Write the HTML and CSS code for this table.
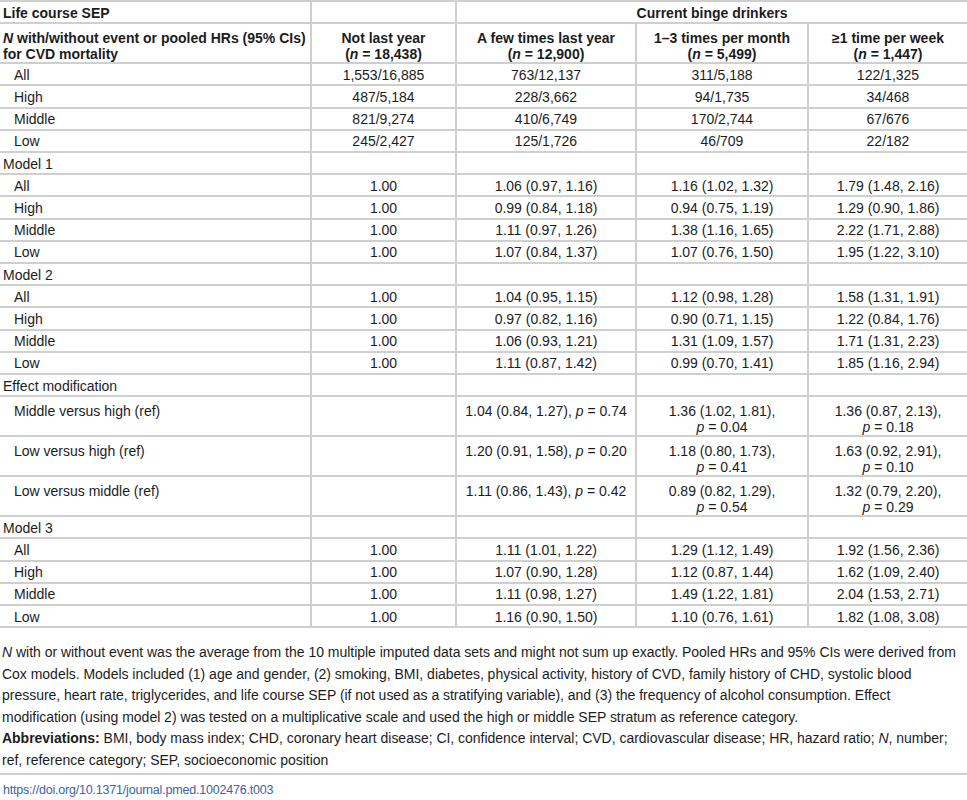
FILE: index.html
```html
<!DOCTYPE html>
<html lang="en">
  <head>
    <meta charset="UTF-8" />
    <meta name="viewport" content="width=device-width, initial-scale=1.0" />
    <title>Table 3</title>
    <link rel="stylesheet" href="styles.css">
  </head>
  <body>
    <table>
      <colgroup>
        <col class="col-label" />
        <col class="col-ref" />
        <col class="col-few" />
        <col class="col-month" />
        <col class="col-week" />
      </colgroup>
      <thead>
        <tr>
          <th class="left">Life course SEP</th>
          <th></th>
          <th colspan="3">Current binge drinkers</th>
        </tr>
        <tr class="tall">
          <th class="left"><i>N</i> with/without event or pooled HRs (95% CIs) for CVD mortality</th>
          <th>Not last year<br />(<i>n</i> = 18,438)</th>
          <th>A few times last year<br />(<i>n</i> = 12,900)</th>
          <th>1–3 times per month<br />(<i>n</i> = 5,499)</th>
          <th>≥1 time per week<br />(<i>n</i> = 1,447)</th>
        </tr>
      </thead>
      <tbody>
        <tr><td class="sub">All</td><td>1,553/16,885</td><td>763/12,137</td><td>311/5,188</td><td>122/1,325</td></tr>
        <tr><td class="sub">High</td><td>487/5,184</td><td>228/3,662</td><td>94/1,735</td><td>34/468</td></tr>
        <tr><td class="sub">Middle</td><td>821/9,274</td><td>410/6,749</td><td>170/2,744</td><td>67/676</td></tr>
        <tr><td class="sub">Low</td><td>245/2,427</td><td>125/1,726</td><td>46/709</td><td>22/182</td></tr>

        <tr><td class="group">Model 1</td><td></td><td></td><td></td><td></td></tr>
        <tr><td class="sub">All</td><td>1.00</td><td>1.06 (0.97, 1.16)</td><td>1.16 (1.02, 1.32)</td><td>1.79 (1.48, 2.16)</td></tr>
        <tr><td class="sub">High</td><td>1.00</td><td>0.99 (0.84, 1.18)</td><td>0.94 (0.75, 1.19)</td><td>1.29 (0.90, 1.86)</td></tr>
        <tr><td class="sub">Middle</td><td>1.00</td><td>1.11 (0.97, 1.26)</td><td>1.38 (1.16, 1.65)</td><td>2.22 (1.71, 2.88)</td></tr>
        <tr><td class="sub">Low</td><td>1.00</td><td>1.07 (0.84, 1.37)</td><td>1.07 (0.76, 1.50)</td><td>1.95 (1.22, 3.10)</td></tr>

        <tr><td class="group">Model 2</td><td></td><td></td><td></td><td></td></tr>
        <tr><td class="sub">All</td><td>1.00</td><td>1.04 (0.95, 1.15)</td><td>1.12 (0.98, 1.28)</td><td>1.58 (1.31, 1.91)</td></tr>
        <tr><td class="sub">High</td><td>1.00</td><td>0.97 (0.82, 1.16)</td><td>0.90 (0.71, 1.15)</td><td>1.22 (0.84, 1.76)</td></tr>
        <tr><td class="sub">Middle</td><td>1.00</td><td>1.06 (0.93, 1.21)</td><td>1.31 (1.09, 1.57)</td><td>1.71 (1.31, 2.23)</td></tr>
        <tr><td class="sub">Low</td><td>1.00</td><td>1.11 (0.87, 1.42)</td><td>0.99 (0.70, 1.41)</td><td>1.85 (1.16, 2.94)</td></tr>

        <tr><td class="group">Effect modification</td><td></td><td></td><td></td><td></td></tr>
        <tr class="tall"><td class="sub">Middle versus high (ref)</td><td></td><td>1.04 (0.84, 1.27), <i>p</i> = 0.74</td><td>1.36 (1.02, 1.81),<br /><i>p</i> = 0.04</td><td>1.36 (0.87, 2.13),<br /><i>p</i> = 0.18</td></tr>
        <tr class="tall"><td class="sub">Low versus high (ref)</td><td></td><td>1.20 (0.91, 1.58), <i>p</i> = 0.20</td><td>1.18 (0.80, 1.73),<br /><i>p</i> = 0.41</td><td>1.63 (0.92, 2.91),<br /><i>p</i> = 0.10</td></tr>
        <tr class="tall"><td class="sub">Low versus middle (ref)</td><td></td><td>1.11 (0.86, 1.43), <i>p</i> = 0.42</td><td>0.89 (0.82, 1.29),<br /><i>p</i> = 0.54</td><td>1.32 (0.79, 2.20),<br /><i>p</i> = 0.29</td></tr>

        <tr><td class="group">Model 3</td><td></td><td></td><td></td><td></td></tr>
        <tr><td class="sub">All</td><td>1.00</td><td>1.11 (1.01, 1.22)</td><td>1.29 (1.12, 1.49)</td><td>1.92 (1.56, 2.36)</td></tr>
        <tr><td class="sub">High</td><td>1.00</td><td>1.07 (0.90, 1.28)</td><td>1.12 (0.87, 1.44)</td><td>1.62 (1.09, 2.40)</td></tr>
        <tr><td class="sub">Middle</td><td>1.00</td><td>1.11 (0.98, 1.27)</td><td>1.49 (1.22, 1.81)</td><td>2.04 (1.53, 2.71)</td></tr>
        <tr><td class="sub">Low</td><td>1.00</td><td>1.16 (0.90, 1.50)</td><td>1.10 (0.76, 1.61)</td><td>1.82 (1.08, 3.08)</td></tr>
      </tbody>
    </table>

    <div class="notes">
      <p><i>N</i> with or without event was the average from the 10 multiple imputed data sets and might not sum up exactly. Pooled HRs and 95% CIs were derived from Cox models. Models included (1) age and gender, (2) smoking, BMI, diabetes, physical activity, history of CVD, family history of CHD, systolic blood pressure, heart rate, triglycerides, and life course SEP (if not used as a stratifying variable), and (3) the frequency of alcohol consumption. Effect modification (using model 2) was tested on a multiplicative scale and used the high or middle SEP stratum as reference category.</p>
      <p><b>Abbreviations:</b> BMI, body mass index; CHD, coronary heart disease; CI, confidence interval; CVD, cardiovascular disease; HR, hazard ratio; <i>N</i>, number; ref, reference category; SEP, socioeconomic position</p>
    </div>

    <a class="doi" href="#">https://doi.org/10.1371/journal.pmed.1002476.t003</a>
  </body>
</html>
```

FILE: styles.css
```css
body {
  margin: 0;
  background: #ffffff;
  color: #1c1c1c;
  font-family: "Liberation Sans", Arial, sans-serif;
}
table {
  width: 967px;
  border-collapse: collapse;
  table-layout: fixed;
  font-size: 14px;
}
.col-label {
  width: 311px;
}
.col-ref {
  width: 145px;
}
.col-few {
  width: 180px;
}
.col-month {
  width: 172px;
}
.col-week {
  width: 159px;
}
th,
td {
  border: 2px solid #cfcfcf;
  padding: 2.5px 3px 0.5px 3px;
  line-height: 17.2px;
  text-align: center;
  vertical-align: top;
}
tr.tall th {
  padding-top: 5.5px;
  padding-bottom: 0.5px;
  line-height: 16px;
}
tr.tall td {
  padding-top: 7px;
  padding-bottom: 0;
  line-height: 15.5px;
}
tr > :first-child {
  border-left: none;
}
tr > :last-child {
  border-right: none;
}
th {
  font-weight: bold;
}
th.left,
td.group {
  text-align: left;
}
td.sub {
  text-align: left;
  padding-left: 14px;
}
.notes {
  padding: 14px 2px 2px 2px;
  border-bottom: 2px solid #cfcfcf;
  font-size: 14px;
  letter-spacing: -0.02px;
  line-height: 21.5px;
}
.notes p {
  margin: 0;
}
.doi {
  display: inline-block;
  margin: 8px 3px 0 3px;
  color: #3b63a6;
  text-decoration: none;
  font-size: 12.5px;
  letter-spacing: -0.2px;
}
```
